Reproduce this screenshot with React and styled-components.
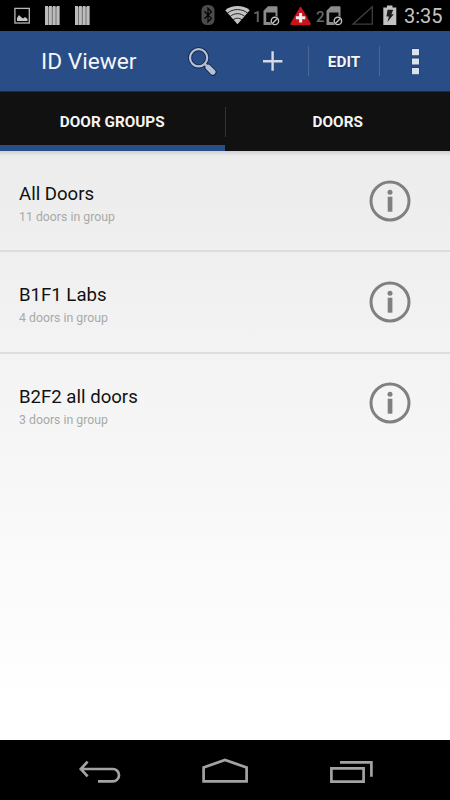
import React, { Component } from 'react';
import styled, { createGlobalStyle } from 'styled-components';

const GlobalStyle = createGlobalStyle`
  * {
    box-sizing: border-box;
  }

  body {
    margin: 0;
    background-color: #000000;
    font-family: Roboto, "Liberation Sans", sans-serif;
  }
`;

const Screen = styled.div`
  width: 450px;
  height: 800px;
  display: flex;
  flex-direction: column;
  overflow: hidden;
`;

const StatusBar = styled.div`
  flex: none;
  height: 31px;
  padding: 0 7px 0 14px;
  display: flex;
  align-items: center;
  justify-content: space-between;
  background-color: #000000;
`;

const StatusGroup = styled.div`
  height: 31px;
  display: flex;
  align-items: flex-start;
  gap: ${props => props.$gap || 0}px;
`;

const StatusIcon = styled.svg`
  flex: none;
  display: block;
  width: ${props => props.$width}px;
  height: 31px;
  margin-left: ${props => props.$left || 0}px;
`;

const SimNumber = styled.span`
  flex: none;
  width: 10px;
  margin-left: ${props => props.$left}px;
  color: #666666;
  font-size: 15px;
  font-weight: 500;
  line-height: 35px;
`;

const Clock = styled.span`
  flex: none;
  width: 39px;
  margin-left: 7px;
  color: #c4c4c4;
  font-size: 20px;
  line-height: 32px;
  white-space: nowrap;
`;

const ActionBar = styled.header`
  flex: none;
  height: 61px;
  padding-left: 41px;
  display: flex;
  align-items: center;
  background-color: #294d87;
  border-bottom: 1px solid #1d2c45;
`;

const Title = styled.h1`
  flex: none;
  width: 126px;
  margin: 0;
  color: #f4f6fa;
  font-size: 22.7px;
  font-weight: 400;
  line-height: 60px;
  padding-top: 1px;
  white-space: nowrap;
`;

const Action = styled.button`
  flex: none;
  width: ${props => props.$width}px;
  height: 60px;
  padding: ${props => (props.$text ? '2px 0 0' : 0)};
  border: none;
  display: flex;
  align-items: center;
  justify-content: center;
  background: none;
  color: #f4f6fa;
  font-family: inherit;
  font-size: 15.3px;
  font-weight: 700;
  line-height: 18px;
  text-shadow: 0 1px 2px rgba(0, 0, 0, 0.4);
`;

const ActionDivider = styled.div`
  flex: none;
  width: 1px;
  height: 30px;
  background-color: #4a6798;
`;

const TabBar = styled.nav`
  flex: none;
  height: 59px;
  display: flex;
  align-items: center;
  background-color: #111111;
`;

const Tab = styled.button`
  flex: 1;
  height: 59px;
  padding: 6px 0 0;
  border: none;
  border-bottom: 6px solid ${props => (props.$active ? '#294d87' : '#111111')};
  display: flex;
  align-items: center;
  justify-content: center;
  background: none;
  color: #f4f4f4;
  font-family: inherit;
  font-size: 15.3px;
  font-weight: 700;
`;

const TabDivider = styled.div`
  width: 1px;
  height: 30px;
  background-color: #333333;
`;

const List = styled.ul`
  flex: 1;
  margin: 0;
  padding: 0;
  list-style: none;
  background:
    linear-gradient(rgba(0, 0, 0, 0.12), rgba(0, 0, 0, 0)) top / 100% 5px no-repeat,
    linear-gradient(#ececec, #ffffff 94%);
`;

const Row = styled.li`
  height: ${props => (props.$last ? 99 : 101.3)}px;
  padding: 0 39px 0 19px;
  display: flex;
  align-items: center;
  justify-content: space-between;
  border-bottom: ${props => (props.$last ? 'none' : '2px solid #dddddd')};
`;

const RowText = styled.div`
  padding-top: 6px;
`;

const RowTitle = styled.div`
  color: #111111;
  font-size: 18.6px;
  line-height: 24px;
`;

const RowDetail = styled.div`
  color: #a9a9a9;
  font-size: 12.3px;
  line-height: 16px;
  margin-top: 3px;
`;

const InfoButton = styled.button`
  width: 42px;
  height: 42px;
  padding: 0;
  border: none;
  background: none;

  svg {
    display: block;
  }
`;

const NavBar = styled.footer`
  flex: none;
  height: 60px;
  padding: 0 77px 0 78px;
  display: flex;
  align-items: center;
  justify-content: space-between;
  background-color: #000000;

  svg {
    display: block;
    fill: none;
    stroke: #a3a3a3;
    stroke-width: 2.7;
  }
`;

const groups = [
  { name: 'All Doors', count: 11 },
  { name: 'B1F1 Labs', count: 4 },
  { name: 'B2F2 all doors', count: 3 },
];

const PictureIcon = () => (
  <StatusIcon $width={16} viewBox="0 0 16 31">
    <rect x="0.9" y="8.4" width="14.4" height="14.6" fill="none" stroke="#b8b8b8" strokeWidth="1.3" />
    <path d="M3 21v-3l2-3 2 2 2 1.5 2-1.5 2.5 2V21z" fill="#c8c8c8" />
  </StatusIcon>
);

const StripesIcon = () => (
  <StatusIcon $width={15} viewBox="0 0 15 31">
    <rect y="6" width="15" height="19" fill="#bcbcbc" />
    <path d="M3.5 6v19M7.3 6v19M11 6v19M14.6 6v19" stroke="#686868" strokeWidth="0.9" />
    <path d="M3 6.4h1M7 6.4h1M10.6 6.4h1" stroke="#000000" strokeWidth="1" />
  </StatusIcon>
);

const BluetoothIcon = () => (
  <StatusIcon $width={14} viewBox="0 0 14 31">
    <rect x="0.5" y="5" width="13" height="20" rx="5.5" fill="#4b4b4b" />
    <path d="M3.4 11.2l7 7.2-3.4 3.4V8.4l3.4 3.3-7 7" fill="none" stroke="#050505" strokeWidth="1.3" />
  </StatusIcon>
);

const WifiIcon = () => (
  <StatusIcon $width={25} viewBox="0 0 25 31">
    <path d="M12.5 24.3L0.2 10.2C7.2 4.6 17.8 4.6 24.8 10.2z" fill="#c4c4c4" />
    <path
      d="M2.2 13.3C8 8.3 17 8.3 22.8 13.3M5 16.6C9.3 12.7 15.7 12.7 20 16.6M8 20C10.6 17.6 14.4 17.6 17 20"
      fill="none"
      stroke="#222222"
      strokeWidth="1"
    />
  </StatusIcon>
);

const SimIcon = () => (
  <StatusIcon $width={17} viewBox="0 0 17 31">
    <path d="M0.5 25V10.8L5 6.2h8.3q1.2 0 1.2 1.2V25z" fill="#8c8c8c" />
    <path d="M3.2 12.5h9.3V22H3.2z" fill="#050505" />
    <circle cx="11.9" cy="20.9" r="4.8" fill="#000000" />
    <circle cx="11.9" cy="20.9" r="3.7" fill="none" stroke="#c0c0c0" strokeWidth="1.4" />
    <path d="M9.4 23.4l5-5" stroke="#c0c0c0" strokeWidth="1.4" />
  </StatusIcon>
);

const AlertIcon = () => (
  <StatusIcon $width={22} $left={10} viewBox="0 0 22 31">
    <path d="M10.6 7.8L20 24H1.2z" fill="#c9141b" stroke="#c9141b" strokeWidth="1.8" strokeLinejoin="round" />
    <path d="M10.6 13v9.4M5.9 17.7h9.4" stroke="#eeeeee" strokeWidth="3" />
  </StatusIcon>
);

const SignalIcon = () => (
  <StatusIcon $width={22} $left={8} viewBox="0 0 22 31">
    <path d="M2 24.2h19.3V6.8z" fill="none" stroke="#3f3f3f" strokeWidth="1.3" />
  </StatusIcon>
);

const BatteryIcon = () => (
  <StatusIcon $width={14} $left={10} viewBox="0 0 14 31">
    <path d="M0.3 7.4H4V5.4h5.5v2h3.8V25H0.3z" fill="#c2c2c2" />
    <path d="M4.6 9.8h5.6l-1.8 4.4h2.4L4.4 22l1.5-5.6H3.4z" fill="#1d1d1d" />
  </StatusIcon>
);

const SearchIcon = () => (
  <svg width="30" height="30" viewBox="0.4 -0.8 30 30">
    <circle cx="11" cy="11" r="8.6" fill="none" stroke="#14284b" strokeWidth="4" />
    <path d="M17 17l3 3" stroke="#14284b" strokeWidth="4" />
    <path d="M20.4 20.4l5 5" stroke="#14284b" strokeWidth="7.2" strokeLinecap="round" />
    <circle cx="11" cy="11" r="8.6" fill="none" stroke="#b4c0d5" strokeWidth="2.3" />
    <path d="M17 17l3 3" stroke="#b4c0d5" strokeWidth="2.3" />
    <path d="M20.6 20.6l4.6 4.6" stroke="#b4c0d5" strokeWidth="5.4" strokeLinecap="round" />
  </svg>
);

const PlusIcon = () => (
  <svg width="20" height="20" viewBox="0 0 20 20">
    <path d="M9.6 0.3v19.4M0 10.2h19.4" stroke="#d3dae6" strokeWidth="2.4" />
  </svg>
);

const OverflowIcon = () => (
  <svg width="10" height="28" viewBox="0 0 10 28">
    <path d="M1.3 1.3h8.4v26.6H1.3z" fill="#1c3766" opacity="0.55" />
    <path d="M1.3 8.7h8.4v1.8H1.3zM1.3 18.2h8.4V20H1.3z" fill="#294d87" />
    <path d="M2 2h7v6.2H2zM2 11.5h7v6.1H2zM2 21h7v6.2H2z" fill="#dce2ec" />
  </svg>
);

const InfoIcon = () => (
  <svg width="42" height="42" viewBox="0 0 42 42">
    <circle cx="21" cy="21" r="19" fill="none" stroke="#808080" strokeWidth="3" />
    <circle cx="21" cy="12.3" r="2.5" fill="#808080" />
    <path d="M18.7 16.7h4.7v15h-4.7z" fill="#808080" />
  </svg>
);

class DoorGroups extends Component {
  constructor(props) {
    super(props);
    this.state = {
      activeTab: 'groups',
    };
  }

  selectTab = (activeTab) => {
    this.setState({ activeTab });
  };

  render() {
    const { activeTab } = this.state;
    return (
      <Screen>
        <StatusBar>
          <StatusGroup $gap={15}>
            <PictureIcon />
            <StripesIcon />
            <StripesIcon />
          </StatusGroup>
          <StatusGroup>
            <BluetoothIcon />
            <StatusIcon as="span" $width={10} />
            <WifiIcon />
            <SimNumber $left={3}>1</SimNumber>
            <SimIcon />
            <AlertIcon />
            <SimNumber $left={4}>2</SimNumber>
            <SimIcon />
            <SignalIcon />
            <BatteryIcon />
            <Clock>3:35</Clock>
          </StatusGroup>
        </StatusBar>
        <ActionBar>
          <Title>ID Viewer</Title>
          <Action $width={71}><SearchIcon /></Action>
          <Action $width={70}><PlusIcon /></Action>
          <ActionDivider />
          <Action $width={70} $text>EDIT</Action>
          <ActionDivider />
          <Action $width={70}><OverflowIcon /></Action>
        </ActionBar>
        <TabBar>
          <Tab $active={activeTab === 'groups'} onClick={() => this.selectTab('groups')}>
            DOOR GROUPS
          </Tab>
          <TabDivider />
          <Tab $active={activeTab === 'doors'} onClick={() => this.selectTab('doors')}>
            DOORS
          </Tab>
        </TabBar>
        <List>
          {groups.map((group, i) => (
            <Row key={group.name} $last={i === groups.length - 1}>
              <RowText>
                <RowTitle>{group.name}</RowTitle>
                <RowDetail>{group.count} doors in group</RowDetail>
              </RowText>
              <InfoButton><InfoIcon /></InfoButton>
            </Row>
          ))}
        </List>
        <NavBar>
          <svg width="44" height="26" viewBox="0 0 44 26">
            <path d="M9.6 4.6L2.8 12l6.8 7.4M2.8 12h32a6.2 6.2 0 0 1 0 12.4H20" />
          </svg>
          <svg width="47" height="26" viewBox="0 0 47 26">
            <path d="M1.6 24.4V10.4L23 3l21.6 7.4v14z" />
          </svg>
          <svg width="44" height="26" viewBox="0 0 44 26">
            <path d="M2.4 11.4h32.2v13.2H2.4zM11 5.4h31.4v14.4" />
          </svg>
        </NavBar>
      </Screen>
    );
  }
}

function App() {
  return (
    <>
      <GlobalStyle />
      <DoorGroups />
    </>
  );
}

export default App;
